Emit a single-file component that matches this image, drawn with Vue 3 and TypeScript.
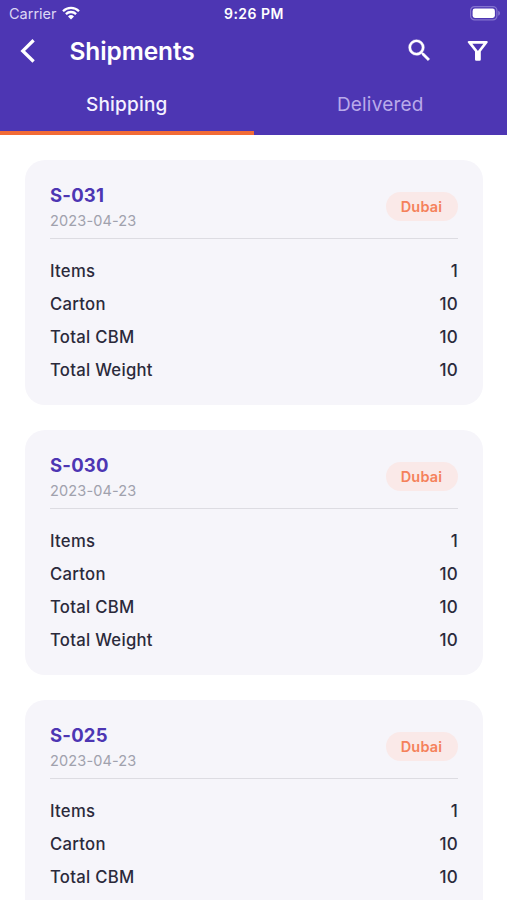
<script setup lang="ts">
import { ref } from 'vue'

interface Shipment {
  code: string
  date: string
  destination: string
  details: { label: string; value: number }[]
}

const tabs = ['Shipping', 'Delivered']
const activeTab = ref(0)

const makeShipment = (code: string): Shipment => ({
  code,
  date: '2023-04-23',
  destination: 'Dubai',
  details: [
    { label: 'Items', value: 1 },
    { label: 'Carton', value: 10 },
    { label: 'Total CBM', value: 10 },
    { label: 'Total Weight', value: 10 },
  ],
})

const shipments: Shipment[] = ['S-031', 'S-030', 'S-025'].map(makeShipment)
</script>

<template>
  <div class="screen">
    <header class="header">
      <div class="status">
        <div class="carrier">
          <span>Carrier</span>
          <svg class="wifi" viewBox="0 0 18 14" width="18" height="14">
            <path d="M1 5.2a11.4 11.4 0 0 1 16 0" />
            <path d="M3.9 8.1a7.3 7.3 0 0 1 10.2 0" />
            <path class="dot" d="M9 13.4L6 10.4a4.3 4.3 0 0 1 6 0z" />
          </svg>
        </div>
        <span class="clock">9:26 PM</span>
        <div class="power">
          <svg viewBox="0 0 31 15" width="31" height="15">
            <rect class="shell" x="0.6" y="0.6" width="26.3" height="13.3" rx="4" />
            <rect class="charge" x="2.6" y="2.6" width="22.3" height="9.3" rx="2.3" />
            <path class="tip" d="M28.2 4.8c2.4 1 2.4 4 0 5z" />
          </svg>
        </div>
      </div>
      <div class="bar">
        <button class="icon" aria-label="Back">
          <svg viewBox="0 0 16 26" width="16" height="26">
            <path class="back" d="M13.6 2.3L2.8 12.9l10.8 10.6" />
          </svg>
        </button>
        <h1>Shipments</h1>
        <button class="icon search" aria-label="Search">
          <svg viewBox="0 0 24 24" width="29" height="29">
            <path fill="#fff" stroke="#fff" stroke-width="0.3" d="M15.5 14h-.79l-.28-.27A6.471 6.471 0 0 0 16 9.5 6.5 6.5 0 1 0 9.5 16c1.61 0 3.09-.59 4.23-1.57l.27.28v.79l5 4.99L20.49 19l-4.99-5zm-6 0C7.01 14 5 11.99 5 9.5S7.01 5 9.5 5 14 7.01 14 9.5 11.99 14 9.5 14z" />
          </svg>
        </button>
        <button class="icon" aria-label="Filter">
          <svg viewBox="0 0 22 22" width="22" height="22">
            <path fill="#fff" fill-rule="evenodd" d="M1.9 1H19.6c1.1 0 1.5 1 .9 1.8L13.8 11.6V19.6q0 1.2-1.2 1.2H9.2q-1.2 0-1.2-1.2V11.6L1 2.8C.4 2 .8 1 1.9 1zM5.3 3.8L10.9 10.9l5.5-7.1z" />
          </svg>
        </button>
      </div>
      <nav class="tabs">
        <button
          v-for="(tab, i) in tabs"
          :key="tab"
          class="tab"
          :class="{ active: i === activeTab }"
          @click="activeTab = i"
        >
          {{ tab }}
        </button>
      </nav>
    </header>

    <main class="list">
      <article v-for="s in shipments" :key="s.code" class="card">
        <div class="top">
          <div>
            <h2>{{ s.code }}</h2>
            <p class="date">{{ s.date }}</p>
          </div>
          <span class="badge">{{ s.destination }}</span>
        </div>
        <dl>
          <div v-for="d in s.details" :key="d.label" class="row">
            <dt>{{ d.label }}</dt>
            <dd>{{ d.value }}</dd>
          </div>
        </dl>
      </article>
    </main>
  </div>
</template>

<style>
body {
  margin: 0;
  overflow: hidden;
}
</style>

<style scoped>
.screen {
  height: 900px;
  overflow: hidden;
  background: #fff;
  font-family: Inter, 'Liberation Sans', sans-serif;
  color: #2b2a3b;
}
h1,
h2,
p,
dl,
dd {
  margin: 0;
}
button {
  border: 0;
  padding: 0;
  background: none;
  font: inherit;
  color: inherit;
}
.header {
  height: 135px;
  background: #4d36b3;
  color: #fff;
}
.status {
  display: grid;
  grid-template-columns: 1fr auto 1fr;
  align-items: center;
  height: 27px;
  padding: 0 6px 0 9px;
  font-size: 14.5px;
}
.carrier {
  display: flex;
  align-items: center;
  gap: 5px;
  color: #dcd6f4;
}
.wifi {
  position: relative;
  top: -1px;
  fill: none;
  stroke: #fff;
  stroke-width: 2.3;
}
.wifi .dot {
  fill: #fff;
  stroke: none;
}
.clock {
  margin-left: -2px;
  font-size: 14px;
  font-weight: 600;
  letter-spacing: 0.5px;
}
.power {
  display: flex;
  justify-content: flex-end;
}
.shell {
  fill: none;
  stroke: #8473cf;
  stroke-width: 1.2;
}
.charge {
  fill: #fff;
}
.tip {
  fill: #8473cf;
}
.bar {
  display: flex;
  align-items: center;
  height: 47px;
  padding: 0 18px 0 20px;
}
.icon {
  display: flex;
}
.back {
  fill: none;
  stroke: #fff;
  stroke-width: 3.3;
}
h1 {
  flex: 1;
  margin-left: 33.5px;
  font-size: 24.5px;
  font-weight: 590;
  letter-spacing: -0.1px;
  line-height: 30px;
}
.search {
  margin-right: 33.5px;
}
.tabs {
  display: flex;
  height: 61px;
}
.tab {
  flex: 1;
  box-sizing: border-box;
  padding-top: 3px;
  border-bottom: 4px solid transparent;
  font-size: 19px;
  letter-spacing: 0.2px;
  color: #b9aaea;
}
.tab.active {
  border-color: #f26b35;
  font-weight: 450;
  color: #f4f1ff;
}
.list {
  display: flex;
  flex-direction: column;
  gap: 25px;
  padding: 25px 24.5px 0 25px;
}
.card {
  flex: none;
  box-sizing: border-box;
  height: 245px;
  padding: 22px 25px 0;
  border-radius: 20px;
  background: #f6f5fa;
}
.top {
  display: flex;
  justify-content: space-between;
  height: 57px;
  box-sizing: border-box;
  border-bottom: 1px solid #dddce2;
}
h2 {
  font-size: 18.5px;
  font-weight: 650;
  line-height: 26px;
  letter-spacing: 0.2px;
  color: #4d36b3;
}
.date {
  font-size: 14.5px;
  line-height: 25px;
  letter-spacing: 0.15px;
  color: #a0a1ad;
}
.badge {
  margin-top: 10px;
  width: 72px;
  height: 29px;
  border-radius: 15px;
  background: #fae9e8;
  color: #f5815b;
  font-size: 14.5px;
  font-weight: 600;
  line-height: 29px;
  text-align: center;
  letter-spacing: 0.2px;
}
dl {
  padding-top: 16px;
}
.row {
  display: flex;
  justify-content: space-between;
  font-size: 16.7px;
  font-weight: 500;
  line-height: 33px;
  letter-spacing: 0.27px;
}
dd {
  margin-right: -0.5px;
  font-size: 17px;
}
</style>
